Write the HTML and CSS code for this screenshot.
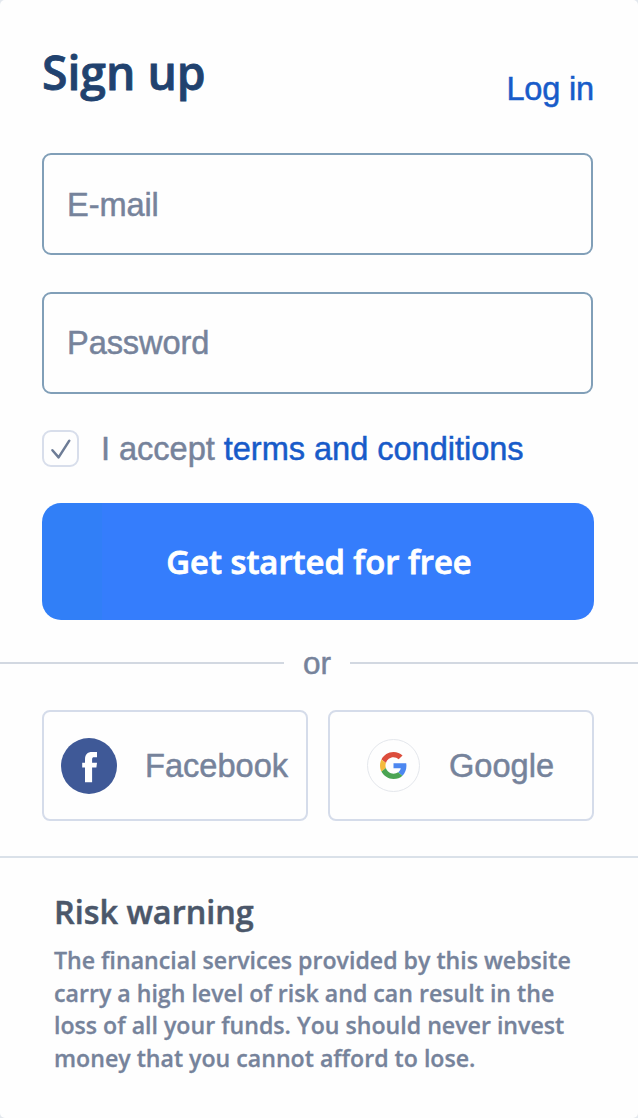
FILE: index.html
```html
<!DOCTYPE html>
<html lang="en">
<head>
  <meta charset="UTF-8">
  <meta name="viewport" content="width=device-width, initial-scale=1.0">
  <title>Sign up</title>
  <link rel="stylesheet" href="styles.css">
</head>
<body>

  <main class="card">
    <header class="card-header">
      <h1>Sign up</h1>
      <a class="login-link" href="#">Log in</a>
    </header>

    <form class="signup-form">
      <input class="field" type="email" name="email" placeholder="E-mail" aria-label="E-mail">
      <input class="field" type="password" name="password" placeholder="Password" aria-label="Password">

      <label class="terms">
        <span class="checkbox">
          <svg width="22" height="22" viewBox="0 0 22 22">
            <path d="M2.4 12.3 L8.6 19.4 L19.3 2.7" />
          </svg>
        </span>
        <span class="terms-text">I accept <a href="#">terms and conditions</a></span>
      </label>

      <button class="submit" type="submit">Get started for free</button>
    </form>

    <div class="divider"><span>or</span></div>

    <div class="social">
      <button class="social-btn facebook" type="button">
        <svg class="fb-icon" width="56" height="56" viewBox="0 0 56 56">
          <circle cx="28" cy="28" r="28" fill="#3f5997" />
          <path fill="#fff" d="M24 44.3V29.5h-2.8v-4.8H24v-3.2c0-5 2.3-7.5 7.2-7.5H36v5.2h-2.8c-1.6 0-2.1.6-2.1 2.2v3.3H36l-.6 4.8h-4.3v14.8z" />
        </svg>
        <span>Facebook</span>
      </button>
      <button class="social-btn google" type="button">
        <span class="google-icon">
          <svg width="27" height="27" viewBox="0 0 48 48">
            <path fill="#dc4d3c" d="M24 9.5c3.5 0 6.7 1.2 9.2 3.6l6.9-6.9C35.9 2.4 30.5 0 24 0 14.6 0 6.5 5.4 2.6 13.2l8 6.2C12.4 13.7 17.7 9.5 24 9.5z" />
            <path fill="#4c87f0" d="M47 24.6c0-1.600-.2-3.100-.4-4.600H24v9h12.900c-.6 3-2.200 5.500-4.700 7.200l7.700 6C44.400 38 47 31.800 47 24.600z" />
            <path fill="#f4bb3c" d="M10.500 28.600c-.5-1.500-.8-3-.8-4.600s.3-3.100.8-4.600l-8-6.200C.9 16.500 0 20.100 0 24s.9 7.500 2.600 10.800z" />
            <path fill="#4ba453" d="M24 48c6.500 0 11.900-2.100 15.900-5.800l-7.700-6c-2.100 1.400-4.900 2.300-8.200 2.300-6.300 0-11.600-4.200-13.500-9.900l-8 6.200C6.500 42.600 14.600 48 24 48z" />
          </svg>
        </span>
        <span>Google</span>
      </button>
    </div>

    <footer class="risk">
      <h2>Risk warning</h2>
      <p>The financial services provided by this website<br>
      carry a high level of risk and can result in the<br>
      loss of all your funds. You should never invest<br>
      money that you cannot afford to lose.</p>
    </footer>
  </main>

</body>
</html>
```

FILE: styles.css
```css
* {
  box-sizing: border-box;
}

body {
  margin: 0;
  background: #e3e8ee;
  font-family: "Liberation Sans", Arial, sans-serif;
  font-size: 32.6px;
  color: #76839b;
  -webkit-text-stroke: 0.5px;
}

a {
  color: #185bc9;
  text-decoration: none;
}

.card {
  width: 638px;
  height: 1118px;
  background: #fefefe;
  border-radius: 5px;
  overflow: hidden;
}

/* Header */
.card-header {
  display: flex;
  justify-content: space-between;
  align-items: flex-start;
  height: 153px;
  padding: 41px 44px 0 42px;
}

h1 {
  margin: 0;
  font: 600 46.3px/64px "Open Sans", sans-serif;
  color: #21426f;
  -webkit-text-stroke: 0.8px;
}

.login-link {
  margin-top: 29px;
  line-height: 38px;
  letter-spacing: -0.2px;
}

/* Form */
.signup-form {
  padding: 0 44px 0 42px;
}

.field {
  display: block;
  width: 551px;
  height: 102px;
  margin: 0 0 37px;
  padding: 2px 23px 0;
  border: 2px solid #819fb8;
  border-radius: 9px;
  background: #fefefe;
  font: inherit;
  letter-spacing: -0.1px;
  color: #21426f;
  outline: none;
  -webkit-text-stroke: 0.5px;
}

.field[type="password"] {
  padding-top: 0;
}

.field::placeholder {
  color: #76839b;
  opacity: 1;
}

.terms {
  display: flex;
  align-items: center;
  gap: 22px;
  height: 37px;
  margin: -1px 0 36px;
}

.terms-text {
  padding-top: 1px;
  letter-spacing: -0.04px;
}

.checkbox {
  display: flex;
  justify-content: center;
  align-items: center;
  width: 37px;
  height: 37px;
  border: 2px solid #d8deeb;
  border-radius: 9px;
}

.checkbox path {
  fill: none;
  stroke: #6d7c96;
  stroke-width: 2.5;
  stroke-linecap: round;
  stroke-linejoin: round;
}

.submit {
  display: block;
  width: 552px;
  height: 117px;
  padding: 0 0 0 2px;
  border: none;
  border-radius: 19px;
  background: linear-gradient(90deg, #317ff7 60px, #357dfc 60px);
  font: 600 32.8px "Open Sans", sans-serif;
  color: #fff;
  -webkit-text-stroke: 0.8px;
}

/* Divider */
.divider {
  display: flex;
  align-items: center;
  height: 40px;
  margin-top: 23px;
  font-size: 31.5px;
}

.divider::before,
.divider::after {
  content: "";
  height: 2px;
  background: #d2d8e1;
}

.divider::before {
  width: 284px;
}

.divider::after {
  flex: 1;
}

.divider span {
  width: 66px;
  text-align: center;
}

/* Social buttons */
.social {
  display: flex;
  gap: 20px;
  height: 111px;
  margin: 27px 44px 0 42px;
}

.social-btn {
  display: flex;
  align-items: center;
  width: 266px;
  border: 2px solid #d5dcea;
  border-radius: 8px;
  background: #fefefe;
  font: inherit;
  color: #76839b;
  -webkit-text-stroke: 0.5px;
}

.social-btn > span:last-child {
  padding-top: 1px;
}

.facebook {
  gap: 28px;
  padding: 0 0 0 17px;
}

.google {
  gap: 29px;
  padding: 0 0 0 37px;
}

.fb-icon {
  flex: none;
}

.google-icon {
  display: flex;
  justify-content: center;
  align-items: center;
  width: 53px;
  height: 53px;
  border: 1px solid #e4e7ec;
  border-radius: 50%;
}

/* Risk warning */
.risk {
  margin-top: 35px;
  padding: 30px 54px 0;
  border-top: 2px solid #dae1e9;
  font-family: "Open Sans", sans-serif;
  font-weight: 600;
}

.risk h2 {
  margin: 0;
  font-size: 32.4px;
  font-weight: 600;
  line-height: 46px;
  color: #4b576a;
}

.risk p {
  margin: 10px 0 0;
  font-size: 23.15px;
  line-height: 32.6px;
  white-space: nowrap;
  -webkit-text-stroke: 0.3px;
}
```
